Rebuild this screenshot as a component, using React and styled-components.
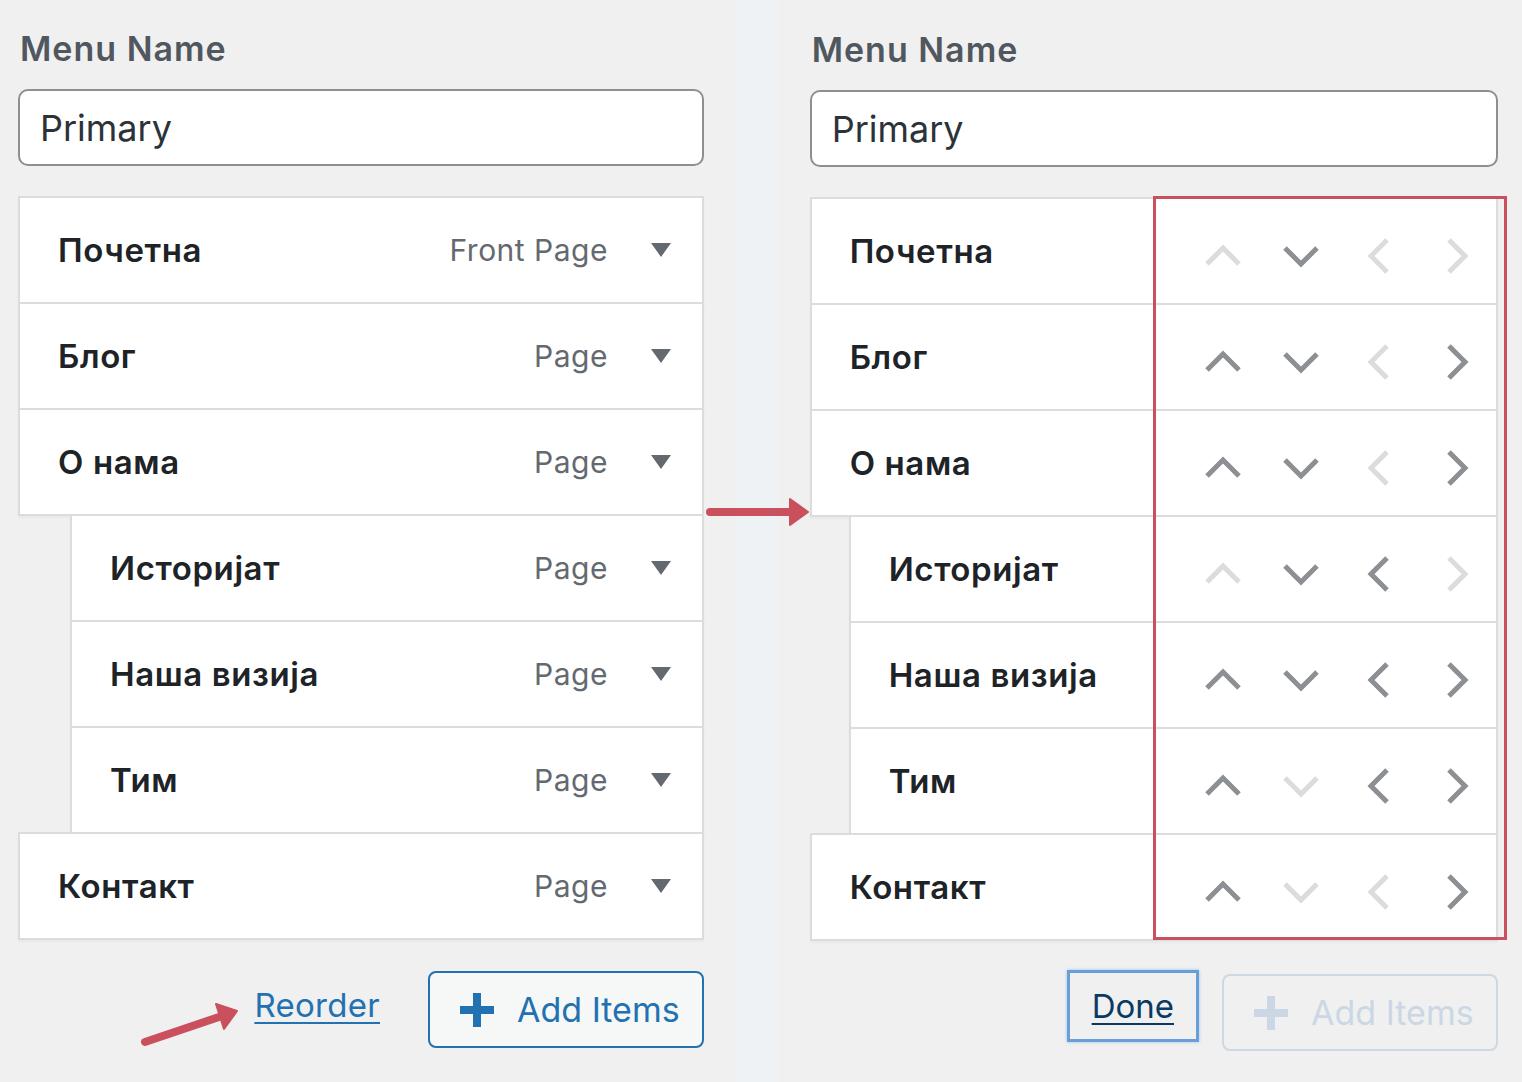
import React from 'react';
import styled, { createGlobalStyle } from 'styled-components';

const GlobalStyle = createGlobalStyle`
  html, body {
    margin: 0;
    padding: 0;
    background: #f0f0f1;
    font-family: Inter, "Noto Sans", "DejaVu Sans", sans-serif;
  }
  * {
    box-sizing: border-box;
  }
`;

const Page = styled.div`
  position: relative;
  display: flex;
  width: 1522px;
  height: 1082px;
  overflow: hidden;
`;

const Panel = styled.section`
  position: relative;
  flex: ${(p) => (p.$grow ? 1 : 'none')};
  width: ${(p) => (p.$width ? `${p.$width}px` : 'auto')};
  padding: ${(p) => p.$top}px ${(p) => p.$right}px 0 ${(p) => p.$left}px;
  background: #f0f0f1;
`;

const Gutter = styled.div`
  width: 45px;
  background: #eff2f5;
`;

const Heading = styled.h2`
  margin: 0 0 20px 2px;
  font-size: 34px;
  font-weight: 600;
  line-height: 40px;
  letter-spacing: 1px;
  color: #50575e;
`;

const NameInput = styled.input`
  display: block;
  width: 100%;
  height: 77px;
  padding: 0 20px;
  border: 2px solid #8c8f94;
  border-radius: 10px;
  background: #fff;
  font-family: inherit;
  font-size: 36px;
  color: #2c3338;
  outline: none;
`;

const List = styled.div`
  position: relative;
  margin-top: 30px;
`;

const Item = styled.div`
  display: flex;
  align-items: center;
  height: 108px;
  margin-left: ${(p) => p.$indent}px;
  margin-top: -2px;
  padding: 0 ${(p) => p.$padRight}px 0 38px;
  border: 2px solid #dcdcde;
  background: #fff;
  box-shadow: 0 2px 2px rgba(0, 0, 0, 0.03);

  &:first-child {
    margin-top: 0;
  }
`;

const Title = styled.span`
  flex: 1;
  font-size: 33px;
  font-weight: 600;
  letter-spacing: 0.6px;
  color: #1d2327;
  white-space: nowrap;
`;

const TypeLabel = styled.span`
  font-size: 30px;
  letter-spacing: 0.5px;
  color: #646970;
`;

const Caret = styled.span`
  width: 0;
  height: 0;
  margin-left: 43px;
  border-left: 10.5px solid transparent;
  border-right: 10.5px solid transparent;
  border-top: 14px solid #646970;
`;

const Controls = styled.div`
  display: flex;
  height: 100%;
`;

const MoveButton = styled.button`
  display: flex;
  align-items: center;
  justify-content: center;
  width: 78px;
  height: 100%;
  padding: 10px 0 0;
  border: 0;
  background: transparent;
  color: ${(p) => (p.disabled ? '#dcdcde' : '#8c8f94')};
  cursor: ${(p) => (p.disabled ? 'default' : 'pointer')};
`;

const Highlight = styled.div`
  position: absolute;
  top: -1px;
  bottom: 1px;
  left: 343px;
  right: -9px;
  border: 3px solid #c9505c;
  pointer-events: none;
`;

const Actions = styled.div`
  display: flex;
  align-items: ${(p) => p.$align};
  justify-content: ${(p) => p.$justify};
  gap: ${(p) => p.$gap}px;
  margin-top: ${(p) => p.$top}px;
  padding-left: ${(p) => p.$indent || 0}px;
`;

const LinkButton = styled.a`
  margin-bottom: 10px;
  font-size: 33px;
  letter-spacing: 0.3px;
  color: #2271b1;
  text-decoration: underline;
  text-decoration-thickness: 2px;
  text-underline-offset: 5px;
  cursor: pointer;
`;

const AddButton = styled.button`
  display: flex;
  flex-shrink: 0;
  align-items: center;
  gap: 23px;
  width: 276px;
  height: 77px;
  padding: 0 0 0 30px;
  border: 2px solid ${(p) => (p.disabled ? '#ccd8e5' : '#2271b1')};
  border-radius: 8px;
  background: ${(p) => (p.disabled ? 'transparent' : '#f6f7f7')};
  font-family: inherit;
  font-size: 34px;
  white-space: nowrap;
  color: ${(p) => (p.disabled ? '#cbd7e4' : '#2271b1')};
`;

const DoneButton = styled.button`
  flex-shrink: 0;
  height: 72px;
  margin-top: -4px;
  padding: 0 22px;
  border: 3px solid #6a9ed9;
  background: transparent;
  box-shadow: 0 0 3px rgba(114, 174, 230, 0.7);
  font-family: inherit;
  font-size: 33px;
  color: #0a3a63;
  text-decoration: underline;
  text-decoration-thickness: 2px;
  text-underline-offset: 5px;
`;

const Annotation = styled.svg`
  position: absolute;
  left: ${(p) => p.$x}px;
  top: ${(p) => p.$y}px;
  pointer-events: none;
`;

const PlusIcon = () => (
  <svg width="34" height="34" viewBox="0 0 34 34">
    <rect x="13" y="0" width="8" height="34" fill="currentColor" />
    <rect x="0" y="13" width="34" height="8" fill="currentColor" />
  </svg>
);

const Chevron = ({ dir }) => {
  const vertical = dir === 'up' || dir === 'down';
  const points = {
    up: '4,20 20,4 36,20',
    down: '4,4 20,20 36,4',
    left: '20,4 4,20 20,36',
    right: '4,4 20,20 4,36',
  }[dir];
  return (
    <svg
      width={vertical ? 40 : 24}
      height={vertical ? 24 : 40}
      viewBox={vertical ? '0 0 40 24' : '0 0 24 40'}
    >
      <polyline
        points={points}
        fill="none"
        stroke="currentColor"
        strokeWidth="5"
        strokeLinejoin="miter"
      />
    </svg>
  );
};

const items = [
  { title: 'Почетна', type: 'Front Page', depth: 0, up: false, down: true, left: false, right: false },
  { title: 'Блог', type: 'Page', depth: 0, up: true, down: true, left: false, right: true },
  { title: 'О нама', type: 'Page', depth: 0, up: true, down: true, left: false, right: true },
  { title: 'Историјат', type: 'Page', depth: 1, up: false, down: true, left: true, right: false },
  { title: 'Наша визија', type: 'Page', depth: 1, up: true, down: true, left: true, right: true },
  { title: 'Тим', type: 'Page', depth: 1, up: true, down: false, left: true, right: true },
  { title: 'Контакт', type: 'Page', depth: 0, up: true, down: false, left: false, right: true },
];

const App = () => {
  return (
    <>
      <GlobalStyle />
      <Page>
        <Panel $width={735} $top={29} $left={18} $right={31}>
          <Heading>Menu Name</Heading>
          <NameInput defaultValue="Primary" />
          <List>
            {items.map((item) => (
              <Item key={item.title} $indent={item.depth * 52} $padRight={31}>
                <Title>{item.title}</Title>
                <TypeLabel>{item.type}</TypeLabel>
                <Caret />
              </Item>
            ))}
          </List>
          <Actions $top={31} $align="center" $justify="flex-end" $gap={48}>
            <LinkButton>Reorder</LinkButton>
            <AddButton>
              <PlusIcon />
              Add Items
            </AddButton>
          </Actions>
          <Annotation $x={135} $y={995} width="115" height="58" viewBox="0 0 115 58">
            <line x1="10" y1="47" x2="87" y2="21" stroke="#c9505c" strokeWidth="8" strokeLinecap="round" />
            <polygon points="102,16 89,34 81,9" fill="#c9505c" stroke="#c9505c" strokeWidth="2" strokeLinejoin="round" />
          </Annotation>
        </Panel>

        <Gutter />

        <Panel $grow $top={30} $left={31} $right={24}>
          <Heading>Menu Name</Heading>
          <NameInput defaultValue="Primary" />
          <List>
            {items.map((item) => (
              <Item key={item.title} $indent={item.depth * 39} $padRight={0}>
                <Title>{item.title}</Title>
                <Controls>
                  <MoveButton disabled={!item.up} aria-label="Move up">
                    <Chevron dir="up" />
                  </MoveButton>
                  <MoveButton disabled={!item.down} aria-label="Move down">
                    <Chevron dir="down" />
                  </MoveButton>
                  <MoveButton disabled={!item.left} aria-label="Move out">
                    <Chevron dir="left" />
                  </MoveButton>
                  <MoveButton disabled={!item.right} aria-label="Move in">
                    <Chevron dir="right" />
                  </MoveButton>
                </Controls>
              </Item>
            ))}
            <Highlight />
          </List>
          <Actions $top={33} $align="flex-start" $justify="flex-start" $gap={23} $indent={257}>
            <DoneButton>Done</DoneButton>
            <AddButton disabled>
              <PlusIcon />
              Add Items
            </AddButton>
          </Actions>
        </Panel>

        <Annotation $x={703} $y={497} width="108" height="30" viewBox="0 0 108 30">
          <line x1="7" y1="15" x2="88" y2="15" stroke="#c9505c" strokeWidth="8" strokeLinecap="round" />
          <polygon points="87,2 105,15 87,28" fill="#c9505c" stroke="#c9505c" strokeWidth="2" strokeLinejoin="round" />
        </Annotation>
      </Page>
    </>
  );
};

export default App;
